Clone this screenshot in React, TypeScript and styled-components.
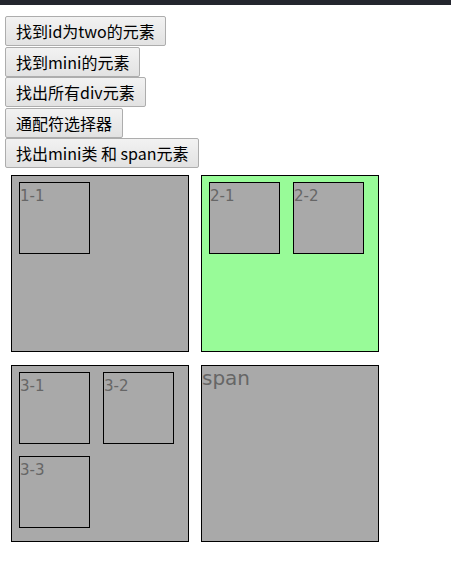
import React from 'react';
import styled, { createGlobalStyle } from 'styled-components';

const GlobalStyle = createGlobalStyle`
  html, body {
    margin: 0;
    padding: 0;
    background: #ffffff;
  }
`;

const TopBar = styled.div`
  height: 5px;
  background: #23262e;
`;

const Content = styled.div`
  padding: 11px 0 0 5px;
`;

const ButtonList = styled.div`
  display: flex;
  flex-direction: column;
  align-items: flex-start;
`;

const ActionButton = styled.button`
  height: 30px;
  margin: 0 0 0.5px 0;
  padding: 0 10px;
  border: 1px solid #adadad;
  border-radius: 2px;
  background: linear-gradient(#f2f2f2, #e2e2e2);
  color: #000;
  font-family: 'Noto Sans CJK SC', 'Liberation Sans', sans-serif;
  font-size: 16px;
  line-height: 28px;
  white-space: nowrap;
  cursor: pointer;
`;

const BoxGrid = styled.div`
  display: grid;
  grid-template-columns: repeat(2, 178px);
  column-gap: 12px;
  row-gap: 13px;
  margin: 6.5px 0 0 6px;
`;

const Box = styled.div<{ $green?: boolean }>`
  box-sizing: border-box;
  width: 178px;
  height: 177px;
  border: 1px solid #000;
  background: ${p => (p.$green ? '#98fb98' : '#a9a9a9')};
  padding: 6px 0 0 7px;
  display: flex;
  flex-wrap: wrap;
  align-content: flex-start;
  column-gap: 13px;
  row-gap: 12px;
`;

const SpanBox = styled.div`
  box-sizing: border-box;
  width: 178px;
  height: 177px;
  border: 1px solid #000;
  background: #a9a9a9;
  padding-top: 1px;
`;

const SpanText = styled.span`
  font-family: 'DejaVu Sans', Verdana, sans-serif;
  font-size: 20px;
  color: #666;
  line-height: 23px;
`;

const Mini = styled.div`
  box-sizing: border-box;
  width: 71px;
  height: 72px;
  border: 1px solid #000;
  background: #a9a9a9;
  font-family: 'DejaVu Sans', Verdana, sans-serif;
  font-size: 15px;
  line-height: 18px;
  padding-top: 4px;
  color: #666;
`;

const buttons = [
  '找到id为two的元素',
  '找到mini的元素',
  '找出所有div元素',
  '通配符选择器',
  '找出mini类 和 span元素',
];

export default function App() {
  return (
    <>
      <GlobalStyle />
      <TopBar />
      <Content>
        <ButtonList>
          {buttons.map(b => (
            <ActionButton key={b}>{b}</ActionButton>
          ))}
        </ButtonList>
        <BoxGrid>
          <Box>
            <Mini>1-1</Mini>
          </Box>
          <Box $green>
            <Mini>2-1</Mini>
            <Mini>2-2</Mini>
          </Box>
          <Box>
            <Mini>3-1</Mini>
            <Mini>3-2</Mini>
            <Mini>3-3</Mini>
          </Box>
          <SpanBox>
            <SpanText>span</SpanText>
          </SpanBox>
        </BoxGrid>
      </Content>
    </>
  );
}
